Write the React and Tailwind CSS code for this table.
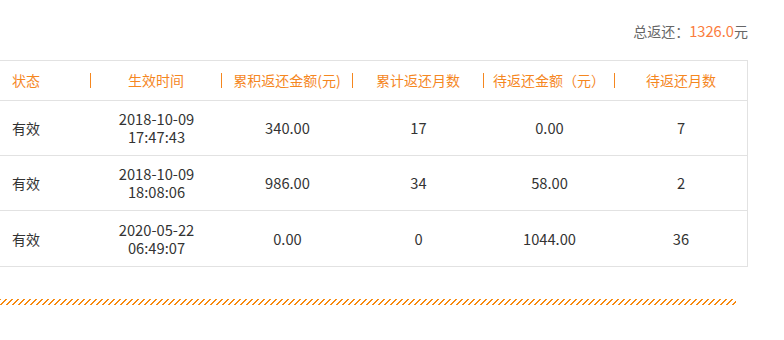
import React from "react";

const rows = [
  ["有效", "2018-10-09", "17:47:43", "340.00", "17", "0.00", "7"],
  ["有效", "2018-10-09", "18:08:06", "986.00", "34", "58.00", "2"],
  ["有效", "2020-05-22", "06:49:07", "0.00", "0", "1044.00", "36"],
];

const headers = ["生效时间", "累积返还金额(元)", "累计返还月数", "待返还金额（元）", "待返还月数"];

export default function App() {
  return (
    <div
      className="w-[784px] h-[340px] bg-white text-[#333]"
      style={{ fontFamily: '"Microsoft YaHei", "Noto Sans CJK SC", sans-serif' }}
    >
      <div className="w-[748px] pt-[21px]">
        <div className="h-[20px] flex justify-end items-center text-[14px] leading-[20px] text-[#666]">
          总返还：<span className="text-[#fb7c3c] text-[14.7px]">1326.0</span>元
        </div>
        <div className="mt-[19px] border-t border-b border-r border-[#e2e2e2]">
          <div className="grid grid-cols-[91px_131px_131px_131px_131px_1fr] h-[40px] items-center text-[14px] text-[#f5871f] border-b border-[#e2e2e2]">
            <div className="pl-[12px] h-[15px] flex items-center border-r border-[#f5871f]">状态</div>
            {headers.map((h, i) => (
              <div
                key={i}
                className={
                  "h-[15px] flex items-center justify-center whitespace-nowrap " +
                  (i < 4 ? "border-r border-[#f5871f]" : "")
                }
              >
                {h}
              </div>
            ))}
          </div>
          {rows.map((r, i) => (
            <div
              key={i}
              className={
                "grid grid-cols-[91px_131px_131px_131px_131px_1fr] h-[55px] items-center text-[14.7px] leading-[18px] " +
                (i < rows.length - 1 ? "border-b border-[#e2e2e2]" : "")
              }
            >
              <div className="pl-[12px] text-[14px]">{r[0]}</div>
              <div className="text-center leading-[18px]">
                {r[1]}
                <br />
                {r[2]}
              </div>
              <div className="text-center">{r[3]}</div>
              <div className="text-center">{r[4]}</div>
              <div className="text-center">{r[5]}</div>
              <div className="text-center">{r[6]}</div>
            </div>
          ))}
        </div>
      </div>
      <div className="mt-[32px] w-[736px] h-[6px] bg-[repeating-linear-gradient(135deg,#f7890f_0px,#f7890f_1.1px,transparent_1.1px,transparent_4.24px)]" />
    </div>
  );
}
